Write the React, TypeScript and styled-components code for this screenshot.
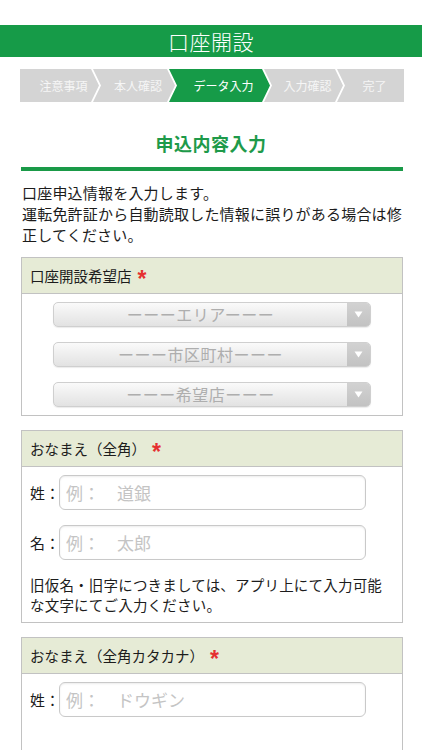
import React from "react";
import styled, { createGlobalStyle } from "styled-components";

const GlobalStyle = createGlobalStyle`
  html, body {
    margin: 0;
    padding: 0;
    background: #ffffff;
  }
  body {
    font-family: "Noto Sans CJK JP", "Noto Sans", sans-serif;
    color: #222;
  }
`;

const Page = styled.div`
  width: 422px;
  height: 750px;
  padding-top: 25px;
  box-sizing: border-box;
  overflow: hidden;
`;

const TitleBar = styled.header`
  height: 32px;
  background: #169b48;
  color: #ffffff;
  font-size: 21px;
  font-weight: 300;
  line-height: 32px;
  text-align: center;
  letter-spacing: 0.5px;
`;

const Steps = styled.ol`
  list-style: none;
  display: flex;
  margin: 12px 18px 0 20px;
  padding: 0;
  height: 33px;
`;

const Step = styled.li<{ $active?: boolean; $first?: boolean; $last?: boolean; $w: number }>`
  flex: 0 0 ${(p) => p.$w}px;
  margin-left: ${(p) => (p.$first ? 0 : -6)}px;
  background: ${(p) => (p.$active ? "#169b48" : "#d4d4d4")};
  color: ${(p) => (p.$active ? "#ffffff" : "#f6f6f6")};
  font-size: 12px;
  display: flex;
  align-items: center;
  justify-content: center;
  padding-left: 8px;
  box-sizing: border-box;
  clip-path: polygon(
    0 0,
    ${(p) => (p.$last ? "100% 0, 100% 100%" : "calc(100% - 8px) 0, 100% 50%, calc(100% - 8px) 100%")},
    0 100%${(p) => (p.$first ? "" : ", 8px 50%")}
  );
`;

const Heading = styled.h2`
  margin: 29px 0 0;
  font-size: 18px;
  line-height: 24px;
  font-weight: bold;
  color: #1e9a4a;
  text-align: center;
  letter-spacing: 0.5px;
`;

const Rule = styled.div`
  height: 4px;
  margin: 12px 19px 0 21px;
  background: #1a9a48;
`;

const Intro = styled.p`
  margin: 11px 19px 0 22px;
  font-size: 15px;
  line-height: 21px;
  letter-spacing: 0.2px;
  color: #1c1c1c;
`;

const Section = styled.section`
  margin: 12px 19px 14px 21px;
  border: 1px solid #c2c2c2;
  background: #ffffff;
`;

const SectionHead = styled.div`
  height: 35px;
  background: #e6ebd6;
  border-bottom: 1px solid #c2c2c2;
  display: flex;
  align-items: center;
  padding-left: 8px;
  font-size: 14.5px;
  color: #1c1c1c;
`;

const Required = styled.span`
  color: #e53030;
  font-family: "Liberation Sans", sans-serif;
  font-weight: bold;
  font-size: 23px;
  margin-left: 6px;
  line-height: 1;
  position: relative;
  top: 4px;
`;

const SelectStack = styled.div`
  display: flex;
  flex-direction: column;
  gap: 15px;
  padding: 8px 0 8px 31px;
`;

const SelectBox = styled.div`
  width: 318px;
  height: 25px;
  box-sizing: border-box;
  border: 1px solid #cfcfcf;
  border-radius: 5px;
  background: linear-gradient(#fafafa, #e2e2e2);
  box-shadow: 0 1px 1px rgba(0, 0, 0, 0.08);
  display: flex;
  overflow: hidden;
`;

const SelectText = styled.span`
  flex: 1;
  text-align: center;
  font-size: 16px;
  line-height: 23px;
  color: #aeaeae;
  letter-spacing: 0.5px;
`;

const SelectArrow = styled.span`
  flex: 0 0 23px;
  background: linear-gradient(#d2d2d2, #c2c2c2);
  display: flex;
  align-items: center;
  justify-content: center;
`;

const FieldBody = styled.div<{ $open?: boolean }>`
  padding: 8px 0 ${(p) => (p.$open ? 40 : 7)}px 8px;
`;

const FieldRow = styled.label`
  display: flex;
  align-items: center;
  margin-bottom: 15px;
`;

const FieldLabel = styled.span`
  font-size: 15px;
  width: 29px;
  color: #1c1c1c;
`;

const TextInput = styled.input`
  width: 307px;
  height: 35px;
  box-sizing: border-box;
  border: 1px solid #c9c9c9;
  border-radius: 6px;
  box-shadow: inset 0 1px 2px rgba(0, 0, 0, 0.08);
  padding: 0 6px;
  font-family: "Noto Sans CJK JP", sans-serif;
  font-size: 17px;
  outline: none;
  &::placeholder {
    color: #c4c4c4;
  }
`;

const Note = styled.p`
  margin: 0;
  padding-right: 10px;
  font-size: 14.5px;
  line-height: 20px;
  letter-spacing: 0.2px;
  color: #1c1c1c;
`;

const steps = [
  { label: "注意事項", w: 79 },
  { label: "本人確認", w: 82 },
  { label: "データ入力", w: 101, active: true },
  { label: "入力確認", w: 79 },
  { label: "完了", w: 67 },
];

const Arrow = () => (
  <svg width="9" height="7" viewBox="0 0 9 7">
    <path d="M0.5 0.5 H8.5 L4.5 6.5 Z" fill="#ffffff" />
  </svg>
);

const Select: React.FC<{ text: string }> = ({ text }) => (
  <SelectBox>
    <SelectText>{text}</SelectText>
    <SelectArrow>
      <Arrow />
    </SelectArrow>
  </SelectBox>
);

const Field: React.FC<{ label: string; placeholder: string }> = ({ label, placeholder }) => (
  <FieldRow>
    <FieldLabel>{label}</FieldLabel>
    <TextInput placeholder={placeholder} />
  </FieldRow>
);

export default function App() {
  return (
    <Page>
      <GlobalStyle />
      <TitleBar>口座開設</TitleBar>
      <Steps>
        {steps.map((s, i) => (
          <Step key={s.label} $w={s.w} $active={s.active} $first={i === 0} $last={i === steps.length - 1}>
            {s.label}
          </Step>
        ))}
      </Steps>
      <Heading>申込内容入力</Heading>
      <Rule />
      <Intro>
        口座申込情報を入力します。
        <br />
        運転免許証から自動読取した情報に誤りがある場合は修正してください。
      </Intro>

      <Section>
        <SectionHead>
          口座開設希望店<Required>*</Required>
        </SectionHead>
        <SelectStack>
          <Select text="ーーーエリアーーー" />
          <Select text="ーーー市区町村ーーー" />
          <Select text="ーーー希望店ーーー" />
        </SelectStack>
      </Section>

      <Section>
        <SectionHead>
          おなまえ（全角）<Required>*</Required>
        </SectionHead>
        <FieldBody>
          <Field label="姓：" placeholder="例：　道銀" />
          <Field label="名：" placeholder="例：　太郎" />
          <Note>旧仮名・旧字につきましては、アプリ上にて入力可能な文字にてご入力ください。</Note>
        </FieldBody>
      </Section>

      <Section>
        <SectionHead>
          おなまえ（全角カタカナ）<Required>*</Required>
        </SectionHead>
        <FieldBody $open>
          <Field label="姓：" placeholder="例：　ドウギン" />
        </FieldBody>
      </Section>
    </Page>
  );
}
